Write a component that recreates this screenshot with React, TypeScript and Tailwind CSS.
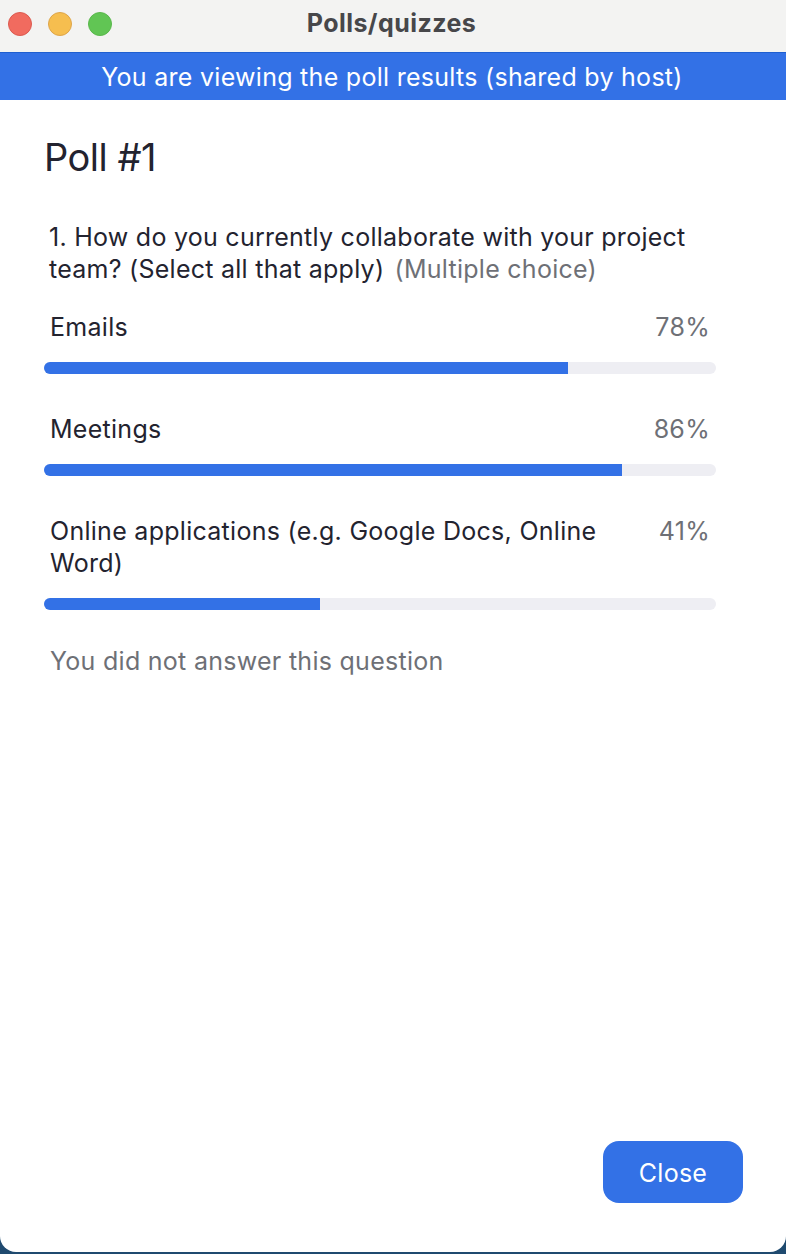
const font = { fontFamily: "Inter, sans-serif" };

const answers = [
  { label: "Emails", pct: 78, fill: "w-[524px]" },
  { label: "Meetings", pct: 86, fill: "w-[578px]" },
  { label: "Online applications (e.g. Google Docs, Online Word)", pct: 41, fill: "w-[276px]" },
];

function Answer({ label, pct, fill }) {
  return (
    <div className="mb-[39px]">
      <div className="flex justify-between px-[6px] text-[25px] leading-[32px] tracking-[0.28px]">
        <span className="w-[560px] text-[#23232f]">{label}</span>
        <span className="text-[#6e7076]">{pct}%</span>
      </div>
      <div className="mt-[19px] h-[12px] w-[672px] overflow-hidden rounded-full bg-[#eeeef3]">
        <div className={`h-full bg-[#3371e6] ${fill}`} />
      </div>
    </div>
  );
}

export default function App() {
  return (
    <div className="h-[1254px] w-[786px] overflow-hidden bg-[#1f4a6f]" style={font}>
      <div className="flex h-[1252px] flex-col overflow-hidden rounded-b-[16px] bg-white">
        {/* title bar */}
        <div className="relative flex h-[53px] items-center justify-center border-b border-[#1f5fd0] bg-[#f3f3f2] pb-[4px] pr-[3px]">
          <div className="absolute left-[8px] top-[12px] flex gap-[16px]">
            <div className="h-[24px] w-[24px] rounded-full border border-[#dc5a50] bg-[#f16b5f]" />
            <div className="h-[24px] w-[24px] rounded-full border border-[#dea54a] bg-[#f6be4f]" />
            <div className="h-[24px] w-[24px] rounded-full border border-[#59b84c] bg-[#61c554]" />
          </div>
          <span className="text-[25px] font-bold tracking-[0.45px] text-[#47474a]">Polls/quizzes</span>
        </div>

        <div className="flex h-[47px] items-center justify-center bg-[#3371e6] pr-[2px] pt-[2px] text-[25px] tracking-[0.28px] text-white">
          You are viewing the poll results (shared by host)
        </div>

        <div className="flex-1 pl-[44px] pr-[70px]">
          <h1 className="mt-[32px] text-[38px] leading-[50px] tracking-[-0.5px] text-[#23232f]">Poll #1</h1>
          <p className="ml-[5px] mt-[39px] text-[25px] leading-[32px] tracking-[0.26px] text-[#23232f]">
            1. How do you currently collaborate with your project team? (Select all that apply){" "}
            <span className="ml-[3px] text-[#6e7076]">(Multiple choice)</span>
          </p>
          <div className="mt-[26px]">
            {answers.map((a) => (
              <Answer key={a.label} {...a} />
            ))}
          </div>
          <p className="-mt-[4px] pl-[6px] text-[25px] leading-[32px] tracking-[0.28px] text-[#6e7076]">You did not answer this question</p>
        </div>

        <div className="flex justify-end pb-[49px] pr-[43px]">
          <button className="h-[62px] w-[140px] rounded-[16px] bg-[#3371e6] pt-[3px] text-[25px] tracking-[0.25px] text-white">Close</button>
        </div>
      </div>
    </div>
  );
}
